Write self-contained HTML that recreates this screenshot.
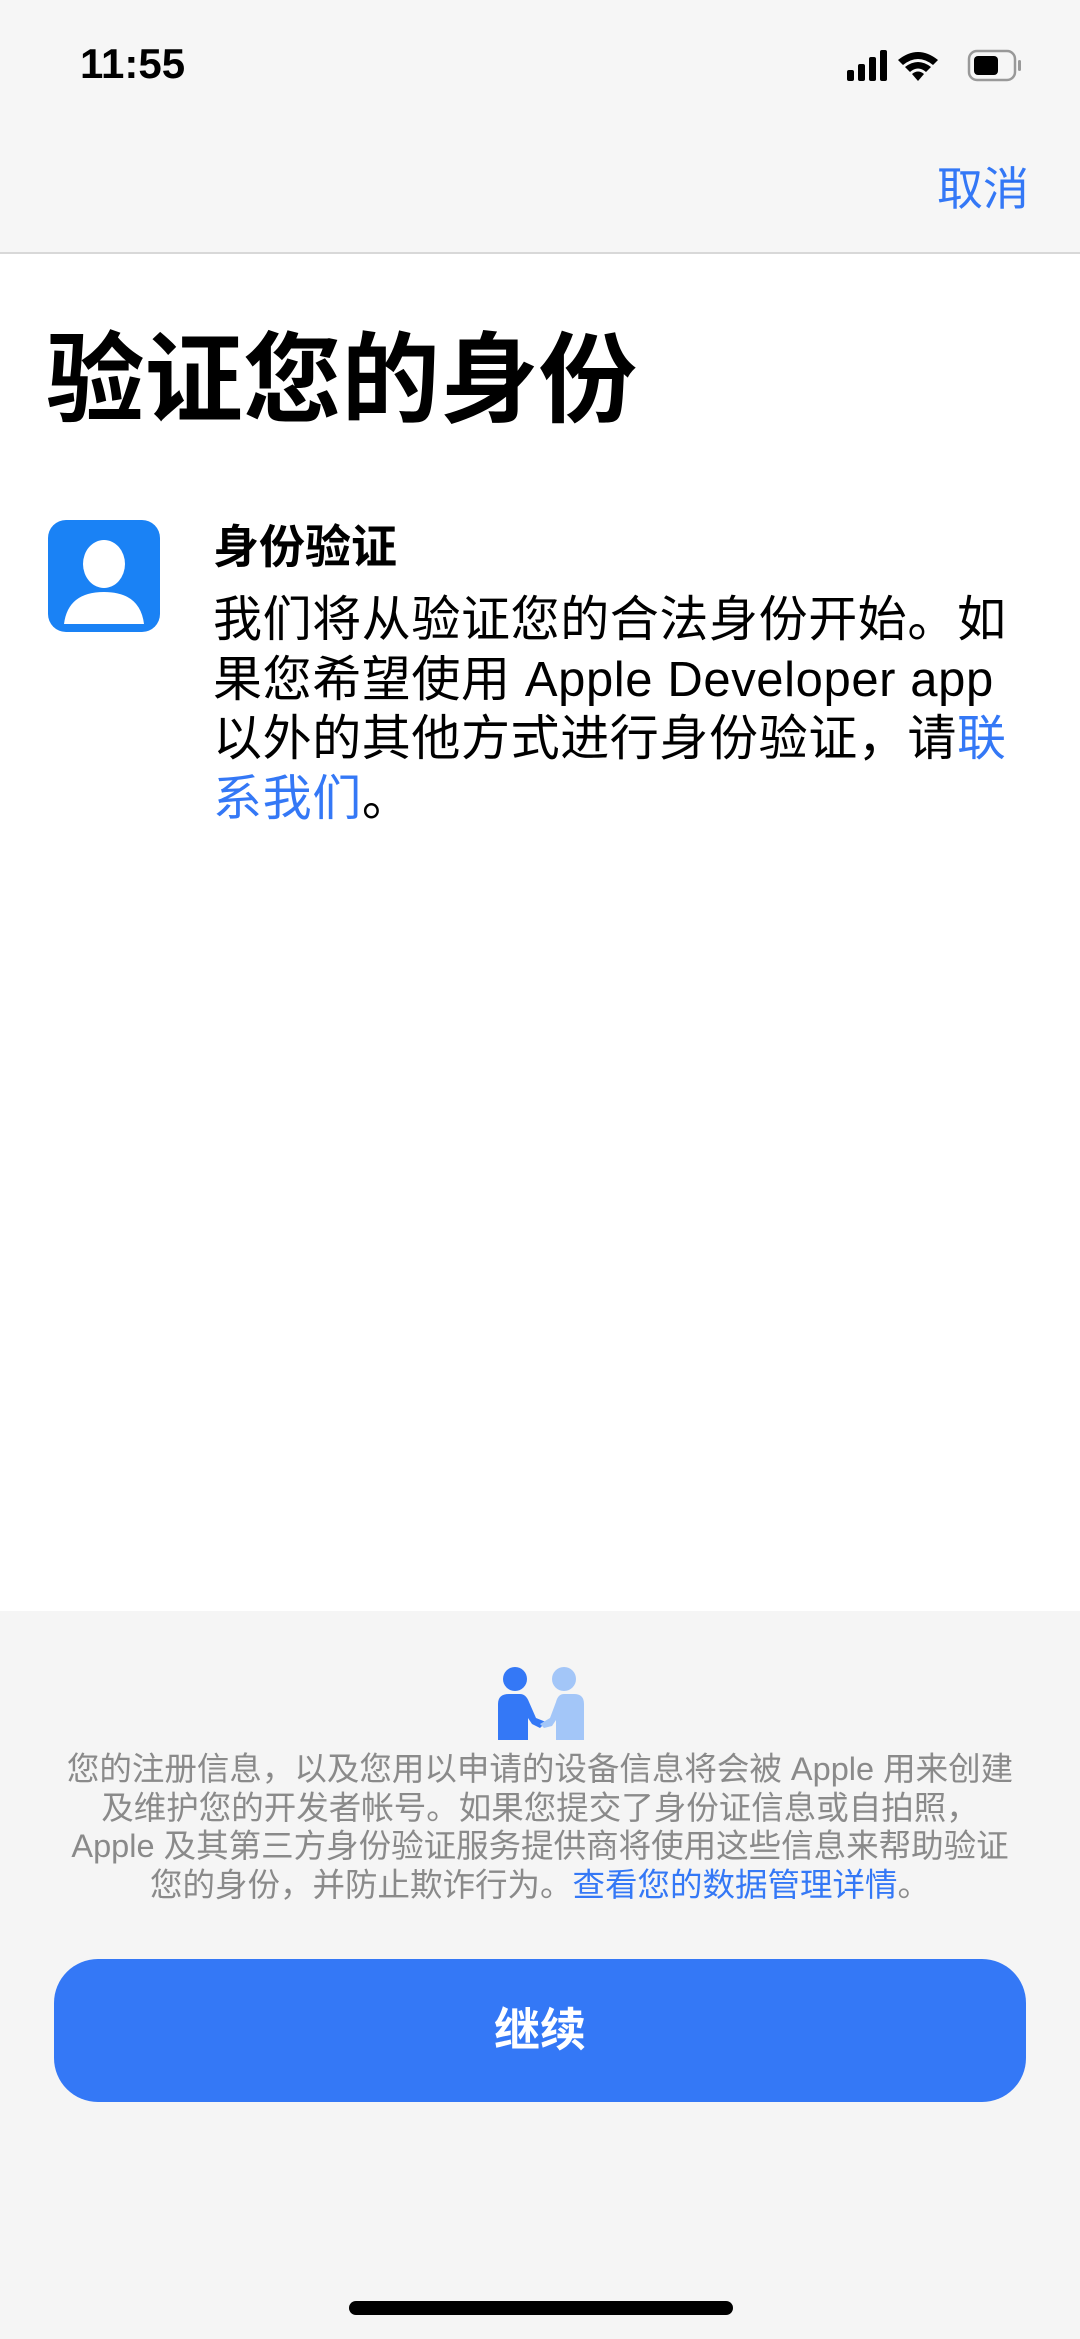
<!DOCTYPE html>
<html><head><meta charset="utf-8"><style>
*{margin:0;padding:0;box-sizing:border-box}
body{width:1080px;height:2339px;background:#fff;position:relative;overflow:hidden;font-family:"Liberation Sans","Noto Sans CJK SC",sans-serif;}
.hdr{position:absolute;left:0;top:0;width:1080px;height:254px;background:#f6f6f6;border-bottom:2px solid #d8d8d8}
.time{position:absolute;left:80px;top:40px;font-size:42px;font-weight:bold;color:#000}
.cancel{position:absolute;right:51px;top:160px;font-size:46px;color:#3478f6;line-height:58px}
.title{position:absolute;left:46px;top:320px;font-size:98.5px;font-weight:bold;line-height:120px;color:#000}
.icon{position:absolute;left:48px;top:520px;width:112px;height:112px;background:#1a82f5;border-radius:18px;overflow:hidden}
.sub{position:absolute;left:213px;top:517px;font-size:46px;font-weight:bold;line-height:60px}
.body{position:absolute;left:213px;top:591px;font-size:49px;letter-spacing:0.6px;line-height:59.5px;color:#000;white-space:nowrap}
.blue{color:#3478f6}
.bottom{position:absolute;left:0;top:1611px;width:1080px;height:728px;background:#f5f5f5}
.foot{position:absolute;left:0;top:1750px;width:1080px;text-align:center;font-size:32.5px;line-height:38.5px;color:#8a8a8a;white-space:nowrap}
.btn{position:absolute;left:54px;top:1959px;width:972px;height:143px;background:#3478f6;border-radius:44px;color:#fff;font-size:46px;font-weight:bold;text-align:center;line-height:143px}
.home{position:absolute;left:349px;top:2301px;width:384px;height:14px;background:#000;border-radius:7px}
</style></head><body>
<div class="hdr">
<div class="time">11:55</div>
<svg style="position:absolute;left:845px;top:48px" width="200" height="36" viewBox="0 0 200 36">
<rect x="2" y="22" width="7" height="11" rx="2" fill="#000"/>
<rect x="13" y="16" width="7" height="17" rx="2" fill="#000"/>
<rect x="24" y="9" width="7" height="24" rx="2" fill="#000"/>
<rect x="35" y="2" width="7" height="31" rx="2" fill="#000"/>
<path d="M53 12 Q73 -4 93 12 L88 17 Q73 5 58 17Z" fill="#000"/>
<path d="M60 19 Q73 9 86 19 L81 24 Q73 17 65 24Z" fill="#000"/>
<path d="M67 26 Q73 21 79 26 L73 33Z" fill="#000"/>
<rect x="124" y="3" width="46" height="29" rx="8" fill="none" stroke="#999" stroke-width="2.5"/>
<rect x="129" y="8" width="24" height="19" rx="4" fill="#000"/>
<rect x="173" y="12" width="3" height="11" rx="1.5" fill="#999"/>
</svg>
<div class="cancel">取消</div>
</div>
<div class="title">验证您的身份</div>
<div class="icon"><svg width="112" height="112" viewBox="0 0 112 112"><ellipse cx="56" cy="44" rx="21" ry="24" fill="#fff"/><path d="M16 104 Q20 72 56 72 Q92 72 96 104Z" fill="#fff"/></svg></div>
<div class="sub">身份验证</div>
<div class="body">我们将从验证您的合法身份开始。如<br>果您希望使用 Apple Developer app<br>以外的其他方式进行身份验证，请<span class="blue">联</span><br><span class="blue">系我们</span>。</div>
<div class="bottom"></div>
<svg style="position:absolute;left:496px;top:1666px" width="90" height="74" viewBox="0 0 90 74">
<circle cx="19" cy="13" r="12" fill="#3478f6"/>
<path d="M2 74 L2 38 Q2 28 13 28 L24 28 Q30 28 33 36 L40 52 L50 56 L44 62 L36 58 L32 52 L32 74Z" fill="#3478f6"/>
<circle cx="68" cy="13" r="12" fill="#a3c6f8"/>
<path d="M88 74 L88 38 Q88 28 78 28 L68 28 Q62 28 60 36 L54 52 L44 58 L48 62 L56 60 L60 54 L60 74Z" fill="#a3c6f8"/>
</svg>
<div class="foot">您的注册信息，以及您用以申请的设备信息将会被 Apple 用来创建<br>及维护您的开发者帐号。如果您提交了身份证信息或自拍照，<br>Apple 及其第三方身份验证服务提供商将使用这些信息来帮助验证<br>您的身份，并防止欺诈行为。<span class="blue">查看您的数据管理详情</span>。</div>
<div class="btn">继续</div>
<div class="home"></div>
</body></html>
